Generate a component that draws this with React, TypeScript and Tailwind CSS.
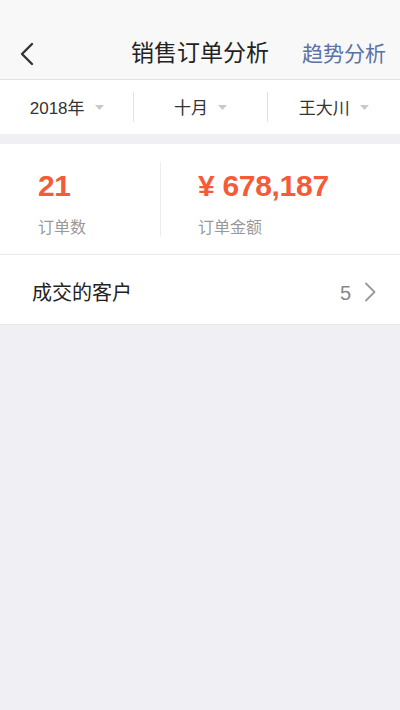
import React from "react";

const FILTERS = ["2018年", "十月", "王大川"];

function Caret() {
  return (
    <svg width="9" height="5" viewBox="0 0 9 5" className="ml-[10px] mt-[1px]">
      <path d="M0 0 L9 0 L4.5 5 Z" fill="#c9c9c9" />
    </svg>
  );
}

export default function App() {
  return (
    <div className="w-[400px] h-[710px] bg-[#efeff4] font-['Liberation_Sans','Noto_Sans_CJK_SC',sans-serif] overflow-hidden">
      {/* nav */}
      <div className="h-[80px] pt-[30px] bg-[#f8f8f8] border-b border-[#e2e2e2]">
        <div className="h-[47px] grid grid-cols-[1fr_auto_1fr] items-center">
          <div className="pl-[19px] flex items-center">
            <svg width="16" height="24" viewBox="0 0 16 24">
              <path d="M13 2 L3 12 L13 22" fill="none" stroke="#333" strokeWidth="2.4" strokeLinecap="round" strokeLinejoin="round" />
            </svg>
          </div>
          <div className="text-[23px] text-[#222] leading-none">销售订单分析</div>
          <div className="flex justify-end pr-[14px] text-[21px] text-[#5b72a6] leading-none">趋势分析</div>
        </div>
      </div>

      {/* filters */}
      <div className="h-[54px] bg-white grid grid-cols-3 items-center">
        {FILTERS.map((f, i) => (
          <div
            key={f}
            className={`h-[30px] flex items-center justify-center text-[17px] text-[#333] ${i > 0 ? "border-l border-[#e2e2e2]" : ""}`}
          >
            <span className="pt-[3px]">{f}</span>
            <Caret />
          </div>
        ))}
      </div>

      {/* stats */}
      <div className="mt-[10px] h-[111px] bg-white border-b border-[#ebebeb] flex items-center">
        <div className="w-[160px] pl-[38px] pt-[9px]">
          <div className="text-[30px] font-bold text-[#f55b38] leading-[34px] tracking-[-0.5px]">21</div>
          <div className="mt-[14px] text-[16px] text-[#999] leading-[22px]">订单数</div>
        </div>
        <div className="w-px h-[74px] bg-[#ececec]" />
        <div className="pl-[37px] pt-[9px]">
          <div className="text-[30px] font-bold text-[#f55b38] leading-[34px] tracking-[-0.3px]">¥ 678,187</div>
          <div className="mt-[14px] text-[16px] text-[#999] leading-[22px]">订单金额</div>
        </div>
      </div>

      {/* customers */}
      <div className="h-[70px] bg-white border-b border-[#e6e6e6] flex items-center justify-between pl-[32px] pr-[24px]">
        <span className="pt-[6px] text-[20px] text-[#222]">成交的客户</span>
        <div className="flex items-center gap-[13px] pt-[4px]">
          <span className="pt-[2px] text-[20px] text-[#888]">5</span>
          <svg width="12" height="20" viewBox="0 0 12 20">
            <path d="M2 1.5 L10.5 10 L2 18.5" fill="none" stroke="#999" strokeWidth="1.8" strokeLinecap="round" strokeLinejoin="round" />
          </svg>
        </div>
      </div>
    </div>
  );
}
